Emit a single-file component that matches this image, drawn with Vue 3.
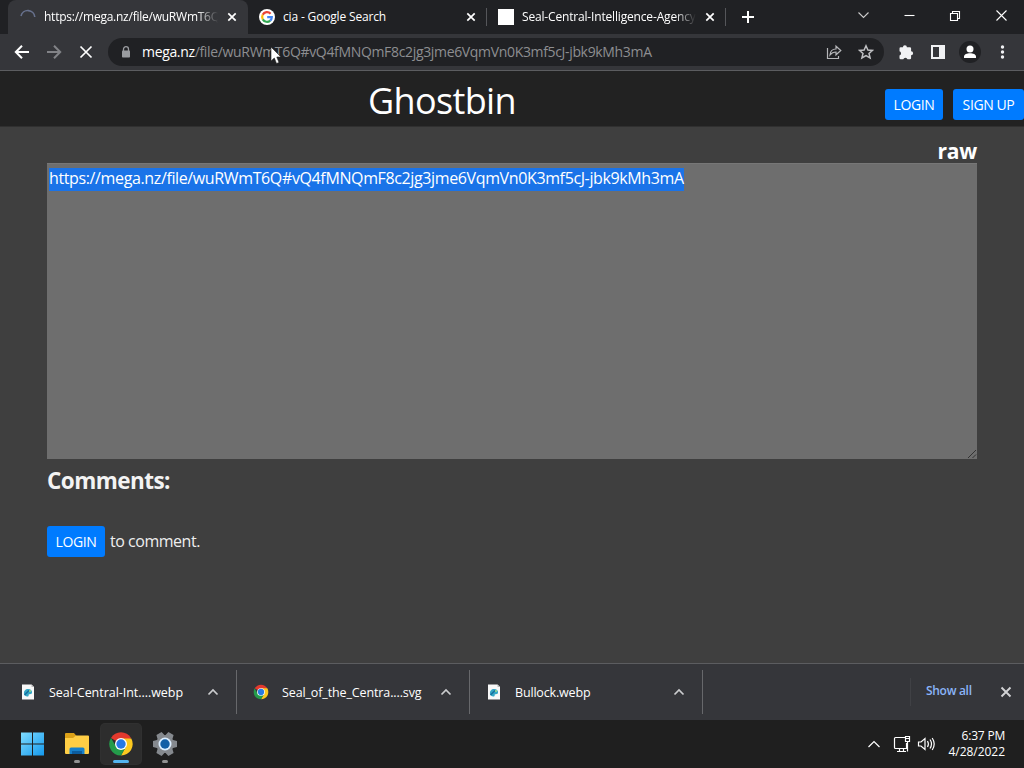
<script setup>
const downloads = [
  { name: 'Seal-Central-Int....webp', kind: 'file', cls: 'd1' },
  { name: 'Seal_of_the_Centra....svg', kind: 'chrome', cls: 'd2' },
  { name: 'Bullock.webp', kind: 'file', cls: 'd3' },
]
</script>

<template>
  <div class="screen">
    <header class="tabstrip">
      <div class="tab active">
        <svg class="fav spin" viewBox="0 0 16 16"><path d="M1 7A7 7 0 0 1 14.8 8" fill="none" stroke="#67718d" stroke-width="1.6" /></svg>
        <span class="title t1">https://mega.nz/file/wuRWmT6Q</span>
        <svg class="x" viewBox="0 0 10 10"><path d="M1.3 1.3l7.4 7.4M8.7 1.3L1.3 8.7" /></svg>
      </div>
      <div class="tab second">
        <svg class="fav" viewBox="0 0 16 16">
          <circle cx="8" cy="8" r="8" fill="#fff" />
          <g fill="none" stroke-width="2.2">
            <path d="M11.6 4.7A4.8 4.8 0 0 0 3.7 5.8" stroke="#ea4335" />
            <path d="M3.7 5.8A4.8 4.8 0 0 0 3.8 10.4" stroke="#fbbc05" />
            <path d="M3.8 10.4A4.8 4.8 0 0 0 11.2 11.6" stroke="#34a853" />
            <path d="M11.2 11.6A4.8 4.8 0 0 0 12.8 8.2H8.2" stroke="#4285f4" />
          </g>
        </svg>
        <span class="title t2">cia - Google Search</span>
        <svg class="x" viewBox="0 0 10 10"><path d="M1.3 1.3l7.4 7.4M8.7 1.3L1.3 8.7" /></svg>
      </div>
      <div class="tab third">
        <i class="fav blank"></i>
        <span class="title t3">Seal-Central-Intelligence-Agency</span>
        <svg class="x" viewBox="0 0 10 10"><path d="M1.3 1.3l7.4 7.4M8.7 1.3L1.3 8.7" /></svg>
      </div>
      <svg class="plus" viewBox="0 0 12 12"><path d="M6 0v12M0 6h12" stroke="#fff" stroke-width="2" /></svg>
      <svg class="wins" viewBox="0 0 154 16" fill="none" stroke="#fff" stroke-width="1.1">
        <path d="M1.5 5.5l5 5 5-5" stroke="#ccc" />
        <path d="M47.5 8.5h10" />
        <path d="M93.5 6.5h7v7h-7zM95.5 6V4.5h7v7H101" />
        <path d="M139.5 3.5l10 10M149.5 3.5l-10 10" />
      </svg>
    </header>

    <nav class="toolbar">
      <svg class="navs" viewBox="0 0 80 16" fill="none" stroke="#fff" stroke-width="2">
        <path d="M15 8H2M8 1.8L1.8 8 8 14.2" />
        <path d="M33 8h13M40 1.8L46.2 8 40 14.2" stroke="#828387" />
        <path d="M66.500 2.500L77.500 13.500M77.500 2.500L66.500 13.500" stroke-width="1.7" />
      </svg>
      <div class="omnibox">
        <svg class="lock" viewBox="0 0 10 12"><path d="M2.5 5V3.2a2.5 2.5 0 0 1 5 0V5" fill="none" stroke="#9a9ca0" stroke-width="1.3" /><rect x="1" y="4.5" width="8" height="7" rx=".8" fill="#9a9ca0" /></svg>
        <span class="url"><b>mega.nz</b>/file/wuRWmT6Q#vQ4fMNQmF8c2jg3jme6VqmVn0K3mf5cJ-jbk9kMh3mA</span>
        <svg class="share" viewBox="0 0 16 16" fill="none" stroke="#b5b6b9" stroke-width="1.2"><path d="M1.5 4v10.5h11V12M4 11c.3-4 2.700-6 6-6V2.200l4.800 4.300L10 10.800V8C7.500 8 5.500 9 4 11z" /></svg>
        <svg class="star" viewBox="0 0 16 16" fill="none" stroke="#bfc0c3" stroke-width="1.5"><path d="M8 1.800l1.900 4.200 4.600.4-3.500 3 1.100 4.500L8 11.500 3.900 13.900 5 9.400l-3.500-3 4.600-.4z" /></svg>
      </div>
      <svg class="ext" viewBox="0 0 118 22">
        <path transform="translate(.7 0)" fill="#f1f2f4" d="M5.200 6.200a2 2 0 0 1 4 0h3a1.200 1.200 0 0 1 1.200 1.200v2.800a2 2 0 0 1 0 4V17a1.200 1.200 0 0 1-1.200 1.200H9.800a2.200 2.200 0 0 0-4.200 0H3A1.200 1.200 0 0 1 1.800 17v-2.500a2.200 2.200 0 0 0 0-4.200V7.400A1.200 1.200 0 0 1 3 6.200z" />
        <rect x="35" y="5" width="12" height="12" fill="none" stroke="#f1f2f4" stroke-width="2" /><path d="M42 5h5v12h-5z" fill="#f1f2f4" />
        <circle cx="73" cy="11" r="11" fill="#202124" /><circle cx="73" cy="8" r="3.500" fill="#fff" /><path d="M67 17v-1.500c0-4.500 12-4.500 12 0V17z" fill="#fff" />
        <g fill="#f1f2f4"><circle cx="105.500" cy="6" r="1.700" /><circle cx="105.500" cy="11" r="1.700" /><circle cx="105.500" cy="16" r="1.700" /></g>
      </svg>
    </nav>

    <section class="sitehead">
      <h1>Ghostbin</h1>
      <div class="auth"><button class="btn"><span>LOGIN</span></button><button class="btn signup"><span>SIGN UP</span></button></div>
    </section>

    <main>
      <div class="raw"><span>raw</span></div>
      <div class="paste">
        <span class="sel">https://mega.nz/file/wuRWmT6Q#vQ4fMNQmF8c2jg3jme6VqmVn0K3mf5cJ-jbk9kMh3mA</span>
        <svg class="grip" viewBox="0 0 10 10"><path d="M1 9l8-8M5.500 9L9 5.500" stroke="#333" stroke-width="1" /></svg>
      </div>
      <h2>Comments:</h2>
      <p class="login"><button class="btn"><span>LOGIN</span></button><span class="tc">to comment.</span></p>
    </main>

    <aside class="shelf">
      <div v-for="d in downloads" :key="d.name" class="dl">
        <svg v-if="d.kind === 'file'" class="dico" viewBox="0 0 16 16"><path d="M2 .5h9.500L14 3v12.500H2z" fill="#f8f8f8" /><path d="M11.500.5V3H14" fill="#bbb" /><path d="M4 10c-.5-3 1.500-5 4-5 3 0 4.500 1.700 4 4-.4 1.500-2 1-3 1.300-.8.300.2 2-1 2.200-2 .3-3.700-.8-4-2.500z" fill="#35a7c6" /><path d="M4.500 11L9 6.500" stroke="#176e9d" stroke-width="1.500" /><circle cx="10" cy="7" r="1" fill="#9edb86" /></svg>
        <svg v-else class="dico" viewBox="0 0 24 24"><path d="M12 12L2.500 6.500A11 11 0 0 1 21.500 6.500z" fill="#e3392d" /><path d="M12 6.500h9.500A11 11 0 0 1 12 23l5-9z" fill="#fdc91f" /><path d="M7 14.500L2.500 6.500A11 11 0 0 0 12 23l4.800-8z" fill="#249b4a" /><circle cx="12" cy="12" r="5.800" fill="#fff" /><circle cx="12" cy="12" r="4.700" fill="#287ce4" /></svg>
        <span class="dname" :class="d.cls">{{ d.name }}</span>
        <svg class="chev" viewBox="0 0 12 8"><path d="M1.500 6.500L6 2l4.500 4.500" fill="none" stroke="#cbccce" stroke-width="1.700" /></svg>
      </div>
      <div class="showall"><span>Show all</span></div>
      <svg class="sx" viewBox="0 0 12 12"><path d="M1.500 1.500l9 9M10.500 1.500l-9 9" stroke="#d2d3d5" stroke-width="1.900" /></svg>
    </aside>

    <footer class="taskbar">
      <div class="app win">
        <svg viewBox="0 0 24 24"><defs><linearGradient id="win" x1="0" y1="0" x2="1" y2="1"><stop stop-color="#7fdcff" /><stop offset="1" stop-color="#1499ed" /></linearGradient></defs><path d="M1 .5h11v11H1zM13 .5h11v11H13zM1 12.500h11v11H1zM13 12.500h11v11H13z" fill="url(#win)" /></svg>
      </div>
      <div class="app">
        <svg viewBox="0 0 24 24"><path d="M0 2q0-1 1-1h8l2.500 3-3 4H0z" fill="#dca118" /><path d="M0 6h8l3-2.500h12q1 0 1 1V21q0 1-1 1H1q-1 0-1-1z" fill="#ffce45" /><path d="M4.500 22v-5q0-1.500 1.500-1.500h12q1.500 0 1.500 1.500v5z" fill="#1680cb" /><path d="M7 19h10v3H7z" fill="#0c5c9e" /></svg>
        <i class="dot"></i>
      </div>
      <div class="app on">
        <svg viewBox="0 0 24 24"><path d="M12 12L2 6A11.600 11.600 0 0 1 22 6z" fill="#e3392d" /><path d="M12 6.500h10.300A11.500 11.500 0 0 1 12 23.500l5-9z" fill="#fdc91f" /><path d="M7 14.500L2 6A11.500 11.500 0 0 0 12 23.500l4.800-8.500z" fill="#249b4a" /><circle cx="12" cy="12" r="6" fill="#fff" /><circle cx="12" cy="12" r="4.700" fill="#2679e6" /></svg>
        <i class="dot wide"></i>
      </div>
      <div class="app">
        <svg viewBox="0 0 24 24"><g fill="#85898e"><circle cx="12" cy="12" r="9" /><path d="M9 0h6l1.200 5H7.800zM9 24h6l1.200-5H7.800z" transform="rotate(30 12 12)" /><path d="M9 0h6l1.200 5H7.800zM9 24h6l1.200-5H7.800z" transform="rotate(90 12 12)" /><path d="M9 0h6l1.200 5H7.800zM9 24h6l1.200-5H7.800z" transform="rotate(150 12 12)" /></g><circle cx="12" cy="12" r="6.500" fill="#dceeff" /><circle cx="12" cy="12" r="4.700" fill="#135fa6" /></svg>
        <i class="dot"></i>
      </div>
      <svg class="tray" viewBox="0 0 70 20" fill="none" stroke="#fff" stroke-width="1.200">
        <path d="M1.500 13L7 7.500l5.500 5.500" />
        <path d="M38 3.500H28.500q-1 0-1 1v9q0 1 1 1h11V9M30 17.500h9M32.500 15v2.500M36.500 15v2.500M38.500 2.500h4v5h-4zM38.500 4.500h4M40.500 7.500v10" />
        <path d="M51.500 8h2.500l4-3.500v11L54 12h-2.500zM60.500 7q1.800 3 0 6M63 5.500q3 4.500 0 9M65.200 4q4 6 0 12" />
      </svg>
      <div class="clock"><span class="c1">6:37 PM</span><span class="c2">4/28/2022</span></div>
    </footer>

    <svg class="cursor" viewBox="0 0 12 19"><path d="M1 1v14l3.300-3 2.200 5.500 2.500-1L6.800 11H11z" fill="#fff" stroke="#222" stroke-width=".6" /></svg>
  </div>
</template>

<style>
html, body { margin: 0; overflow: hidden; background: #3f3f3f; }
</style>
<style scoped>
* { box-sizing: border-box; }
.screen { position: relative; width: 1024px; height: 768px; display: flex; flex-direction: column; overflow: hidden; background: #3f3f3f; color: #fff; font-family: "Open Sans", "Noto Sans", sans-serif; }
svg { display: block; flex: none; }
span { white-space: nowrap; }
.tabstrip { height: 34px; flex: none; background: #202124; display: flex; align-items: center; font-size: 12px; }
.tab { height: 34px; display: flex; align-items: center; position: relative; flex: none; }
.tab.active { width: 240px; margin-left: 8px; background: #35363a; border-radius: 8px 8px 0 0; padding-left: 12px; }
.tab.second { width: 239px; padding-left: 11px; }
.tab.third { width: 239px; padding-left: 11px; }
.second::after, .third::after { content: ""; position: absolute; right: 0; top: 8px; width: 1px; height: 18px; background: #55565a; }
.fav { width: 16px; height: 16px; flex: none; }
.blank { background: #fff; }
.title { width: 174px; margin-left: 8px; overflow: hidden; line-height: 20px; }
.tab .x { width: 10px; height: 10px; margin-left: 9px; stroke: #fff; stroke-width: 1.7; }
.t1, .t3 { -webkit-mask-image: linear-gradient(90deg, #000 88%, transparent); mask-image: linear-gradient(90deg, #000 88%, transparent); }
.t1 { letter-spacing: -.24px; }
.t2 { letter-spacing: -.16px; }
.t3 { letter-spacing: -.17px; }
.plus { width: 12px; height: 12px; margin-left: 16px; }
.wins { width: 154px; height: 16px; margin: -5px 13.500px 0 auto; }
.toolbar { height: 37px; flex: none; background: #35363a; border-bottom: 1px solid #5c5d60; display: flex; align-items: center; }
.navs { width: 80px; height: 16px; margin-left: 14px; }
.omnibox { width: 776px; height: 28px; margin-left: 14px; background: #202124; border-radius: 14px; display: flex; align-items: center; }
.lock { width: 10px; height: 12px; margin-left: 13px; }
.url { margin-left: 11px; font-size: 14px; line-height: 20px; color: #8d8e91; letter-spacing: -.335px; width: 684px; }
.url b { color: #fff; font-weight: 400; }
.share, .star { width: 16px; height: 16px; }
.star { margin-left: 16px; }
.ext { width: 118px; height: 22px; margin-left: 13px; }
.sitehead { height: 56px; flex: none; background: #222; border-bottom: 1px solid #303030; display: flex; }
h1 { margin: 0 0 0 368px; font-weight: 400; font-size: 36px; line-height: 60px; letter-spacing: -.65px; }
.auth { display: flex; gap: 10px; margin: 18px 0 0 auto; }
.btn { width: 58px; height: 31px; padding: 0; border: 0; border-radius: 3px; background: #007bff; color: #fff; font: 14px/31px "Open Sans", sans-serif; letter-spacing: -.4px; text-align: center; }
.signup { width: 71px; }
main { flex: 1; padding: 0 47px; }
.raw { height: 36px; text-align: right; font-size: 21px; line-height: 49px; font-weight: 700; letter-spacing: -.2px; }
.paste { position: relative; height: 296px; background: #6e6e6e; padding: 3px 2px; border-top: 1px solid #777; }
.sel { display: inline-block; width: 635px; height: 23px; background: #1a73e8; font-size: 16px; line-height: 21px; letter-spacing: -.372px; }
.grip { position: absolute; right: 0; bottom: 0; width: 10px; height: 10px; }
h2 { margin: 0; height: 67px; line-height: 43px; font-size: 22.500px; font-weight: 700; letter-spacing: -.55px; color: #f3f3f3; }
.login { margin: 0; display: flex; align-items: center; height: 31px; }
.tc { margin: -2px 0 0 5px; font-size: 16px; letter-spacing: -.47px; color: #eee; }
.shelf { height: 57px; flex: none; background: #35363a; border-top: 1px solid #5c5d60; display: flex; align-items: center; font-size: 12px; }
.dl { width: 233px; height: 44px; border-right: 1px solid #67686b; display: flex; align-items: center; padding-left: 16px; }
.dl:first-child { width: 237px; padding-left: 20px; }
.dico { width: 16px; height: 16px; }
.dname { margin-left: 13px; width: 158px; font-size: 12.500px; }
.d1 { letter-spacing: -.04px; }
.d2 { letter-spacing: -.12px; }
.d3 { letter-spacing: -.17px; }
.chev { width: 12px; height: 8px; }
.showall { margin-left: 207px; width: 90px; height: 28px; border-left: 1px solid #404145; padding-left: 15px; line-height: 26px; color: #8ab4f8; font-weight: 600; letter-spacing: -.3px; }
.sx { width: 12px; height: 12px; }
.taskbar { height: 48px; flex: none; background: #1f1f1f; display: flex; align-items: center; }
.app { position: relative; width: 40px; height: 40px; margin-right: 4px; padding: 8px; border-radius: 4px; }
.app svg { width: 24px; height: 24px; }
.app.win { margin-left: 12px; margin-right: 5px; }
.app.on { background: #2d2d2d; box-shadow: 0 0 0 1px #303030; }
.dot { position: absolute; left: 17px; bottom: 1px; width: 6px; height: 3px; border-radius: 2px; background: #929292; }
.dot.wide { left: 12px; width: 16px; background: #54b4ef; }
.tray { width: 70px; height: 20px; margin-left: auto; }
.clock { width: 68px; margin-right: 19px; display: flex; flex-direction: column; text-align: right; font-size: 12px; line-height: 16px; }
.c1 { letter-spacing: -.2px; }
.c2 { letter-spacing: -.03px; }
.cursor { position: absolute; left: 270px; top: 46px; width: 12px; height: 19px; }
</style>
